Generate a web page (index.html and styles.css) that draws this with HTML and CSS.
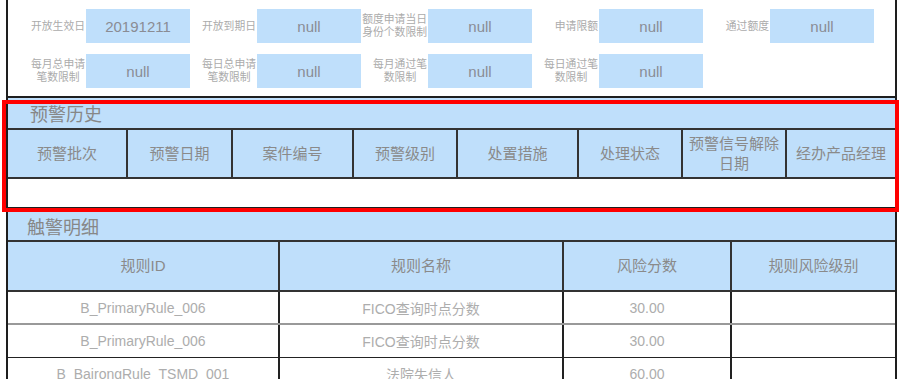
FILE: index.html
```html
<!DOCTYPE html>
<html lang="zh-CN">
<head>
<meta charset="utf-8">
<title>预警</title>
<link rel="stylesheet" href="styles.css">
</head>
<body>
<div class="page">
  <div class="panel form-panel">
    <div class="form-row">
      <div class="field"><div class="lbl"><span>开放生效日</span></div><div class="val">20191211</div></div>
      <div class="field"><div class="lbl"><span>开放到期日</span></div><div class="val">null</div></div>
      <div class="field"><div class="lbl"><span>额度申请当日<br>身份个数限制</span></div><div class="val">null</div></div>
      <div class="field"><div class="lbl"><span>申请限额</span></div><div class="val">null</div></div>
      <div class="field"><div class="lbl"><span>通过额度</span></div><div class="val">null</div></div>
    </div>
    <div class="form-row">
      <div class="field"><div class="lbl"><span>每月总申请<br>笔数限制</span></div><div class="val">null</div></div>
      <div class="field"><div class="lbl"><span>每日总申请<br>笔数限制</span></div><div class="val">null</div></div>
      <div class="field"><div class="lbl"><span>每月通过笔<br>数限制</span></div><div class="val">null</div></div>
      <div class="field"><div class="lbl"><span>每日通过笔<br>数限制</span></div><div class="val">null</div></div>
    </div>
  </div>

  <div class="panel warn-panel">
    <div class="panel-title">预警历史</div>
    <table class="grid warn">
      <colgroup>
        <col class="w119"><col class="w105"><col class="w121"><col class="w104"><col class="w121"><col class="w104"><col class="w104"><col>
      </colgroup>
      <thead>
        <tr><th>预警批次</th><th>预警日期</th><th>案件编号</th><th>预警级别</th><th>处置措施</th><th>处理状态</th><th>预警信号解除日期</th><th>经办产品经理</th></tr>
      </thead>
      <tbody>
        <tr class="empty"><td colspan="8"></td></tr>
      </tbody>
    </table>
  </div>

  <div class="panel hit-panel">
    <div class="panel-title">触警明细</div>
    <table class="grid hits">
      <colgroup>
        <col class="w271"><col class="w284"><col class="w168"><col>
      </colgroup>
      <thead>
        <tr><th>规则ID</th><th>规则名称</th><th>风险分数</th><th>规则风险级别</th></tr>
      </thead>
      <tbody>
        <tr class="first"><td>B_PrimaryRule_006</td><td>FICO查询时点分数</td><td>30.00</td><td></td></tr>
        <tr><td>B_PrimaryRule_006</td><td>FICO查询时点分数</td><td>30.00</td><td></td></tr>
        <tr><td>B_BairongRule_TSMD_001</td><td>法院失信人</td><td>60.00</td><td></td></tr>
      </tbody>
    </table>
  </div>
</div>
<div class="highlight"></div>
</body>
</html>
```

FILE: styles.css
```css
* { box-sizing: border-box; }
html, body { margin: 0; padding: 0; background: #fff; }
body {
  position: relative;
  width: 915px;
  height: 379px;
  overflow: hidden;
  font-family: "Liberation Sans", "Noto Sans CJK SC", sans-serif;
  color: #999;
}
.page {
  margin-left: 6px;
  width: 891px;
}
.panel {
  border-left: 2px solid #1e1e1e;
  border-right: 2px solid #1e1e1e;
}
.form-panel {
  height: 98px;
  padding: 9px 0 0 11px;
  border-bottom: 2px solid #1e1e1e;
  display: flex;
  flex-direction: column;
  gap: 11px;
}
.form-row { display: flex; }
.field { display: flex; width: 171px; height: 34px; }
.lbl {
  width: 67px;
  display: flex;
  align-items: center;
  justify-content: flex-end;
  padding-right: 1px;
  font-size: 10.8px;
  line-height: 13px;
  color: #ababab;
  text-align: center;
  white-space: nowrap;
}
.val {
  width: 104px;
  background: #bfdffb;
  display: flex;
  align-items: center;
  justify-content: center;
  font-size: 15px;
  color: #8a8c94;
}
.panel-title {
  background: #bfdffb;
  color: #878787;
  font-size: 18px;
  border-bottom: 2px solid #333;
}
.warn-panel { border-bottom: 2px solid #1e1e1e; }
.warn-panel .panel-title { height: 32px; padding: 6px 0 0 22px; line-height: 22px; }
.hit-panel .panel-title { height: 33px; padding: 8px 0 0 19px; line-height: 22px; }

.grid {
  width: 100%;
  border-collapse: collapse;
  table-layout: fixed;
}
.grid th {
  background: #bfdffb;
  color: #8a8a8a;
  font-weight: normal;
  font-size: 15px;
  line-height: 20px;
  text-align: center;
  border-right: 2px solid #333;
  border-bottom: 2px solid #333;
  padding: 0 2px;
}
.grid th:last-child { border-right: none; }
.warn th { height: 48px; }
.warn .empty td { height: 29px; }
.hits th { height: 49px; }
.hits td {
  height: 33px;
  text-align: center;
  font-size: 14px;
  color: #adadad;
  border-right: 2px solid #222;
  border-bottom: 1px solid #222;
}
.hits td:last-child { border-right: none; }
.hits tr.first td { border-bottom: 2px solid #999; }
.w119 { width: 119px; }
.w105 { width: 105px; }
.w121 { width: 121px; }
.w104 { width: 104px; }
.w271 { width: 271px; }
.w284 { width: 284px; }
.w168 { width: 168px; }

.highlight {
  position: absolute;
  left: 2px;
  top: 100px;
  width: 897px;
  height: 112px;
  border: 4px solid #f00;
}
```
